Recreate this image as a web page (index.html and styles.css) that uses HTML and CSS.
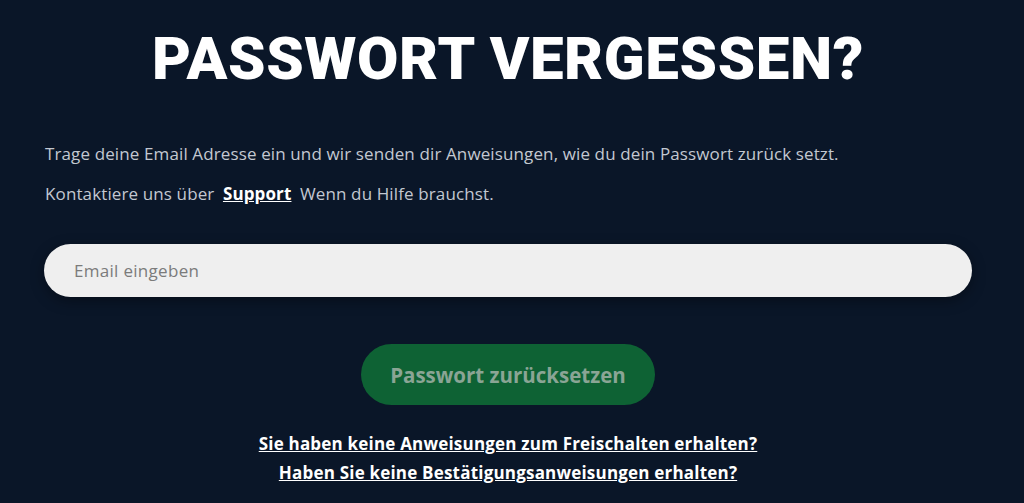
FILE: index.html
```html
<!DOCTYPE html>
<html lang="de">
<head>
<meta charset="utf-8">
<title>Passwort vergessen?</title>
<link rel="stylesheet" href="styles.css">
</head>
<body>
<main class="page">
  <h1 class="title">PASSWORT VERGESSEN?</h1>
  <p class="text">Trage deine Email Adresse ein und wir senden dir Anweisungen, wie du dein Passwort zurück setzt.</p>
  <p class="text text-second">Kontaktiere uns über <a class="support" href="#">Support</a> Wenn du Hilfe brauchst.</p>
  <form class="form">
    <input class="email" type="email" placeholder="Email eingeben">
    <div class="actions">
      <button class="submit" type="button">Passwort zurücksetzen</button>
    </div>
  </form>
  <div class="links">
    <a class="link" href="#">Sie haben keine Anweisungen zum Freischalten erhalten?</a>
    <a class="link" href="#">Haben Sie keine Bestätigungsanweisungen erhalten?</a>
  </div>
</main>
</body>
</html>
```
FILE: styles.css
```css
html, body {
  margin: 0;
  padding: 0;
  background: #0a1628;
  height: 100%;
}
body {
  font-family: "Open Sans", "Noto Sans", sans-serif;
  color: #c3c8d1;
}
.page {
  width: 928px;
  margin-left: 44px;
  display: flex;
  flex-direction: column;
}
.title {
  margin: 24px 0 0;
  font-family: Roboto, "Noto Sans", sans-serif;
  font-weight: 900;
  font-size: 60px;
  line-height: 70px;
  color: #ffffff;
  text-align: center;
  letter-spacing: 0.6px;
}
.text {
  margin: 48px 0 0 1px;
  font-size: 17px;
  line-height: 24px;
  letter-spacing: 0.12px;
}
.text-second {
  margin-top: 16px;
}
.support {
  color: #ffffff;
  font-weight: 700;
  text-decoration: underline;
  margin: 0 4px;
}
.form {
  margin-top: 38px;
  display: flex;
  flex-direction: column;
}
.email {
  height: 53px;
  box-sizing: border-box;
  border: none;
  border-radius: 27px;
  background: #efefef;
  padding: 0 30px;
  font-family: "Open Sans", "Noto Sans", sans-serif;
  font-size: 17px;
  letter-spacing: 0.3px;
  color: #333;
  outline: none;
  box-shadow: 0 4px 14px rgba(0,0,0,0.35);
}
.email::placeholder {
  color: #7b7b7b;
}
.actions {
  display: flex;
  justify-content: center;
  margin-top: 47px;
}
.submit {
  width: 294px;
  height: 61px;
  border: none;
  border-radius: 31px;
  background: #0e6234;
  color: #8aa595;
  font-family: "Open Sans", "Noto Sans", sans-serif;
  font-weight: 700;
  font-size: 20.5px;
}
.links {
  margin-top: 28px;
  display: flex;
  flex-direction: column;
  align-items: center;
  gap: 8px;
}
.link {
  color: #ffffff;
  font-weight: 700;
  font-size: 17px;
  line-height: 21px;
  letter-spacing: 0.2px;
  text-decoration: underline;
}
```
